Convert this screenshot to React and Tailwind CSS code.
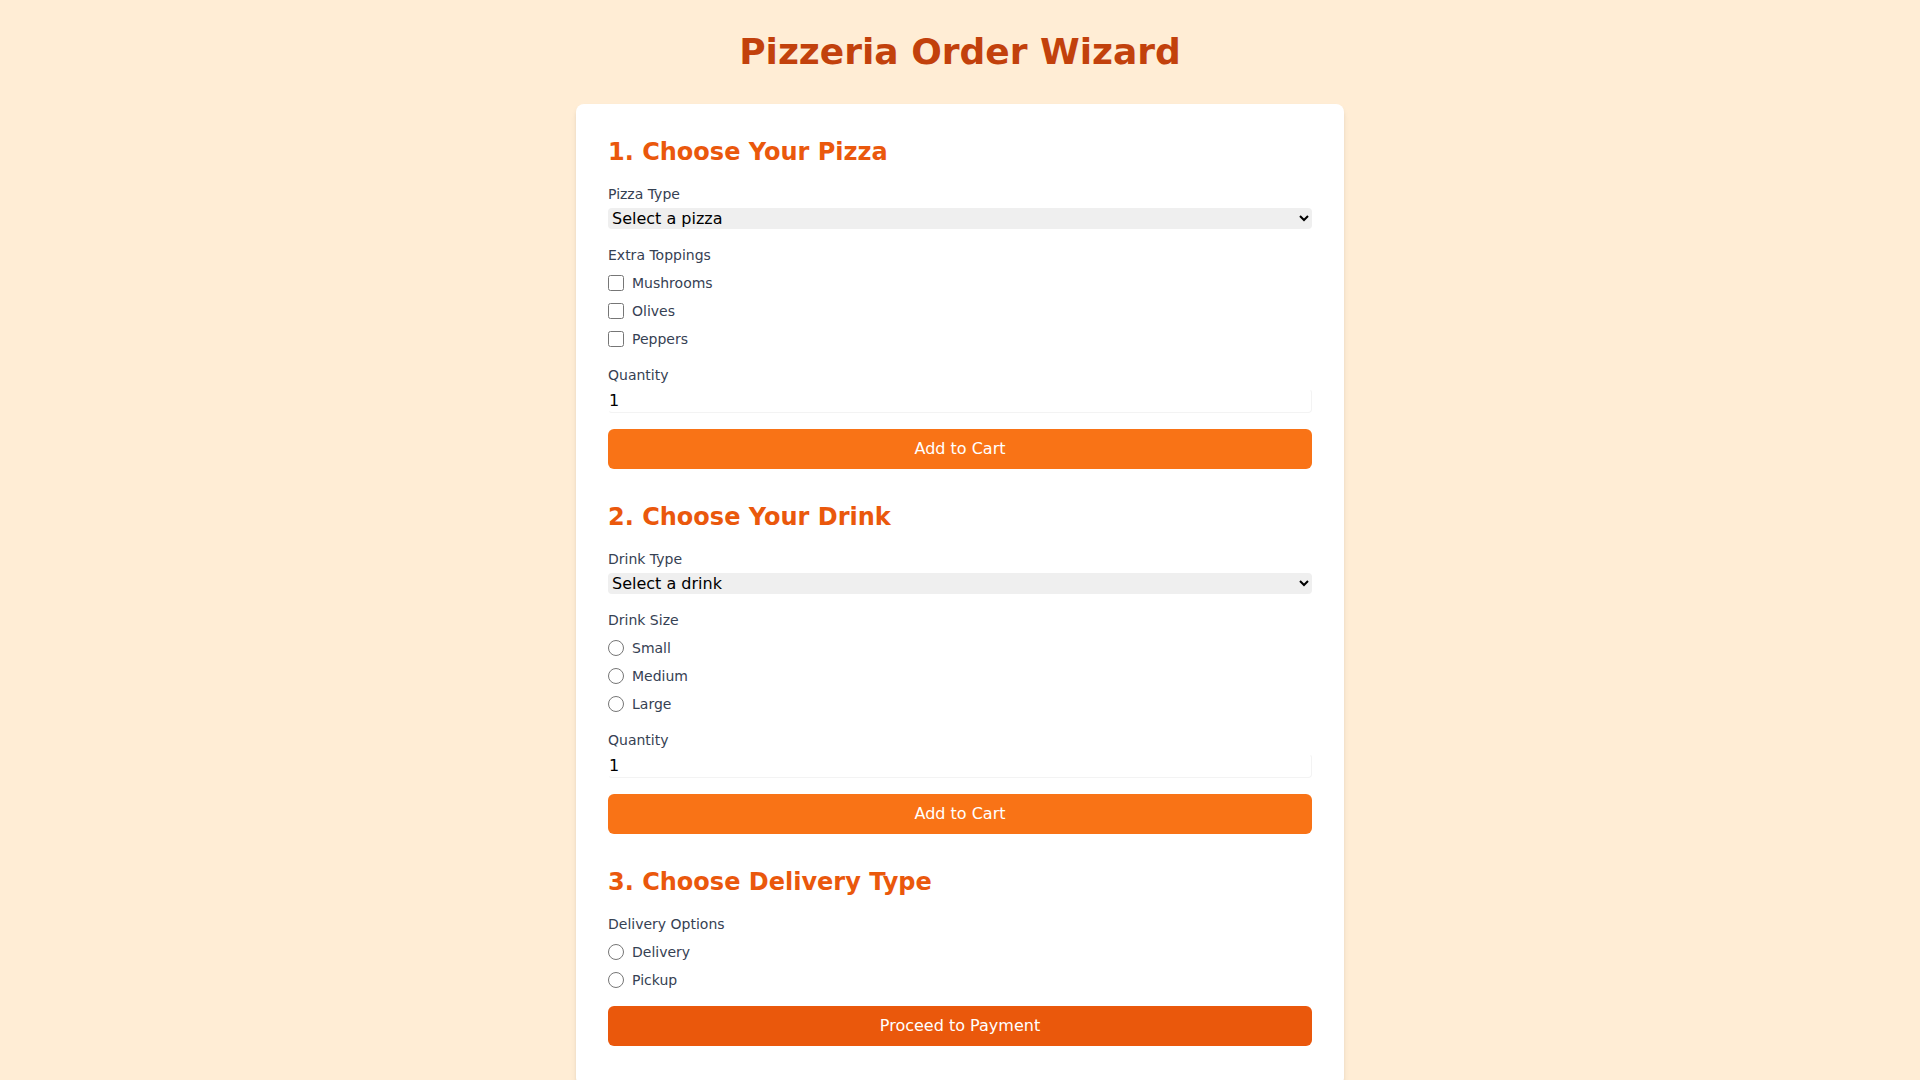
import React, { useState } from 'react'

const pizzas = ['Margherita', 'Pepperoni', 'Hawaiian', 'Veggie'];
const drinks = ['Cola', 'Lemonade', 'Iced Tea', 'Water'];
const toppings = ['Mushrooms', 'Olives', 'Peppers'];
const sizes = ['Small', 'Medium', 'Large'];
const deliveryOptions = ['Delivery', 'Pickup'];

const Label = ({ children }) => (
  <p className="text-sm text-gray-700">{children}</p>
);

const Section = ({ title, children }) => (
  <div className="flex flex-col gap-4">
    <h2 className="text-2xl font-bold text-[#ea580c]">{title}</h2>
    {children}
  </div>
);

const Select = ({ placeholder, options, value, onChange }) => (
  <select
    value={value}
    onChange={(e) => onChange(e.target.value)}
    className="block w-full h-[21px] rounded bg-[#efefef] text-base text-black"
  >
    <option value="">{placeholder}</option>
    {options.map((o) => (
      <option key={o} value={o}>{o}</option>
    ))}
  </select>
);

const Quantity = ({ value, onChange }) => (
  <div className="flex flex-col">
    <Label>Quantity</Label>
    <input
      type="number"
      min="1"
      value={value}
      onChange={(e) => onChange(e.target.value)}
      className="block mt-1 w-full h-6 rounded border border-transparent border-b-[#f3f3f3] border-r-[#f3f3f3] text-base text-black outline-none"
    />
  </div>
);

const OrangeButton = ({ children, dark }) => (
  <button
    type="button"
    className={`w-full py-2 rounded-md text-base text-white ${dark ? 'bg-[#ea580c]' : 'bg-[#f97316]'}`}
  >
    {children}
  </button>
);

const App = () => {
  const [pizza, setPizza] = useState('');
  const [extras, setExtras] = useState([]);
  const [pizzaQty, setPizzaQty] = useState(1);
  const [drink, setDrink] = useState('');
  const [size, setSize] = useState('');
  const [drinkQty, setDrinkQty] = useState(1);
  const [delivery, setDelivery] = useState('');

  const toggleExtra = (t) => {
    setExtras((prev) => prev.includes(t) ? prev.filter((x) => x !== t) : [...prev, t]);
  };

  return (
    <div className="min-h-screen bg-[#ffedd5] px-8 pt-8 pb-8 font-['DejaVu_Sans',sans-serif]">
      <h1 className="text-4xl font-bold text-[#c2410c] text-center mb-8">Pizzeria Order Wizard</h1>

      <div className="max-w-3xl mx-auto bg-white rounded-lg shadow-md p-8 pb-10 flex flex-col gap-8">

        <Section title="1. Choose Your Pizza">
          <div className="flex flex-col gap-1">
            <Label>Pizza Type</Label>
            <Select placeholder="Select a pizza" options={pizzas} value={pizza} onChange={setPizza} />
          </div>
          <div className="flex flex-col gap-2">
            <Label>Extra Toppings</Label>
            {toppings.map((t) => (
              <label key={t} className="flex items-center text-sm text-gray-700 h-5">
                <input
                  type="checkbox"
                  checked={extras.includes(t)}
                  onChange={() => toggleExtra(t)}
                  className="w-4 h-4 m-0 mr-2"
                />
                {t}
              </label>
            ))}
          </div>
          <Quantity value={pizzaQty} onChange={setPizzaQty} />
          <OrangeButton>Add to Cart</OrangeButton>
        </Section>

        <Section title="2. Choose Your Drink">
          <div className="flex flex-col gap-1">
            <Label>Drink Type</Label>
            <Select placeholder="Select a drink" options={drinks} value={drink} onChange={setDrink} />
          </div>
          <div className="flex flex-col gap-2">
            <Label>Drink Size</Label>
            {sizes.map((s) => (
              <label key={s} className="flex items-center text-sm text-gray-700 h-5">
                <input
                  type="radio"
                  name="size"
                  checked={size === s}
                  onChange={() => setSize(s)}
                  className="w-4 h-4 m-0 mr-2"
                />
                {s}
              </label>
            ))}
          </div>
          <Quantity value={drinkQty} onChange={setDrinkQty} />
          <OrangeButton>Add to Cart</OrangeButton>
        </Section>

        <Section title="3. Choose Delivery Type">
          <div className="flex flex-col gap-2">
            <Label>Delivery Options</Label>
            {deliveryOptions.map((d) => (
              <label key={d} className="flex items-center text-sm text-gray-700 h-5">
                <input
                  type="radio"
                  name="delivery"
                  checked={delivery === d}
                  onChange={() => setDelivery(d)}
                  className="w-4 h-4 m-0 mr-2"
                />
                {d}
              </label>
            ))}
          </div>
          <OrangeButton dark>Proceed to Payment</OrangeButton>
        </Section>

      </div>
    </div>
  );
}

export default App;
